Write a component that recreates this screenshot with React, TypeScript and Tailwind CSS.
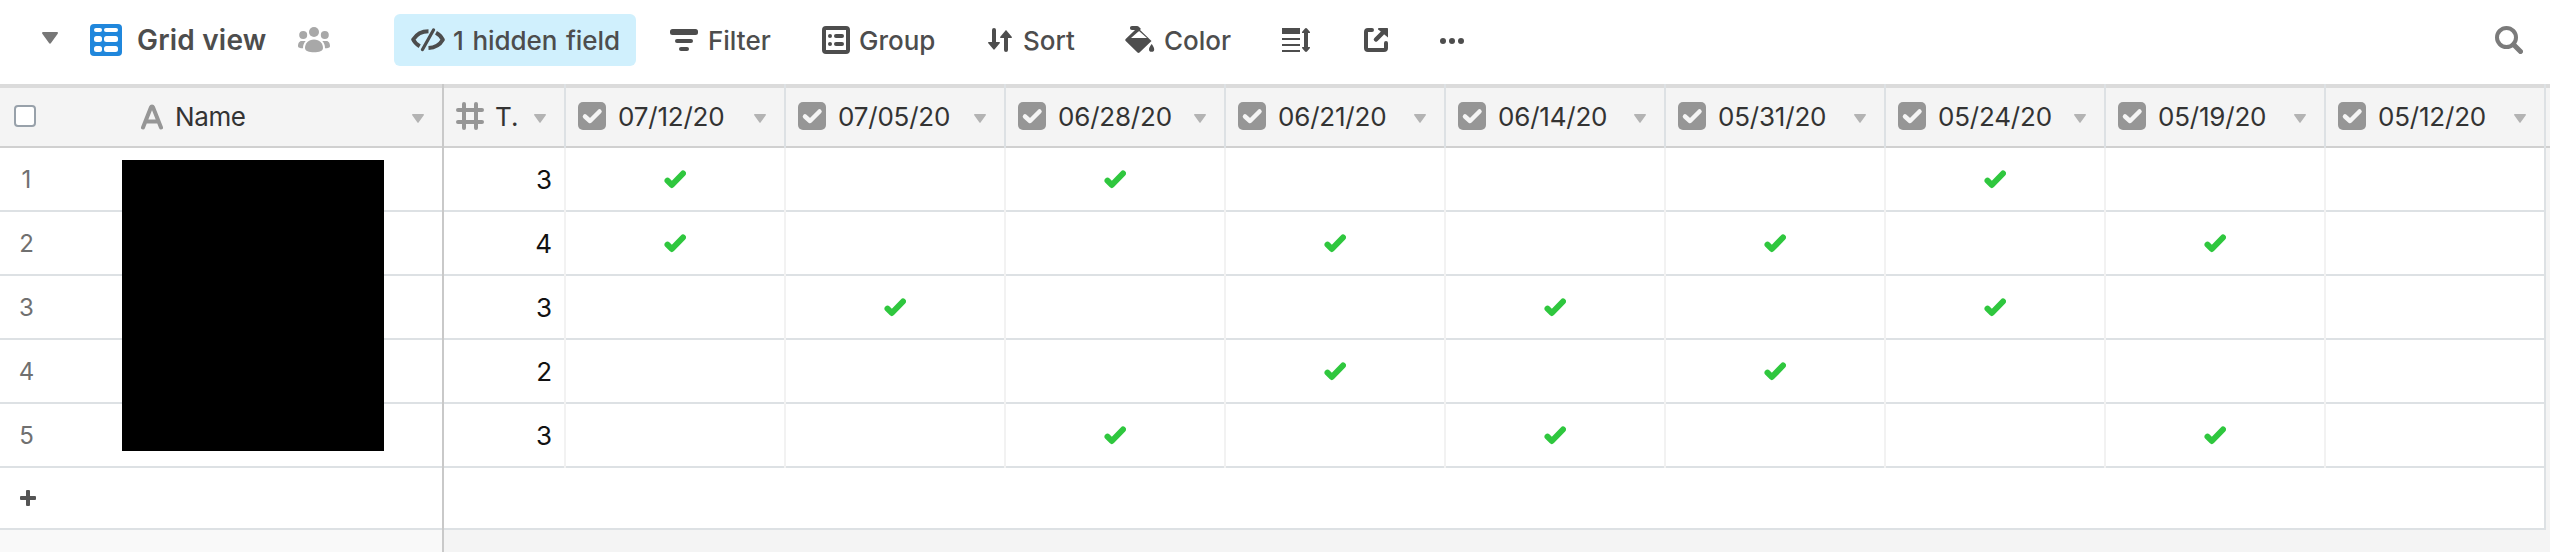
import React from 'react';

const FIELDS = ['07/12/20', '07/05/20', '06/28/20', '06/21/20', '06/14/20', '05/31/20', '05/24/20', '05/19/20', '05/12/20'];

interface Row {
    id: number;
    total: number;
    checked: number[];
}

const ROWS: Row[] = [
    { id: 1, total: 3, checked: [0, 2, 6] },
    { id: 2, total: 4, checked: [0, 3, 5, 7] },
    { id: 3, total: 3, checked: [1, 4, 6] },
    { id: 4, total: 2, checked: [3, 5] },
    { id: 5, total: 3, checked: [2, 4, 7] },
];

const CaretIcon: React.FC<{ className?: string }> = ({ className }) => (
    <svg className={className} viewBox="0 0 16 12" preserveAspectRatio="none" fill="currentColor">
        <path d="M1 0h14c.9 0 1.2 1 .7 1.7L9 11c-.5.9-1.5.9-2 0L.3 1.7C-.2 1 .1 0 1 0z" />
    </svg>
);

const GridIcon = () => (
    <svg className="h-8 w-8 text-[#2087dc]" viewBox="0 0 32 32">
        <rect width="32" height="32" rx="4" fill="currentColor" />
        <g fill="#fff">
            <rect x="4" y="4" width="8" height="4" rx="2" />
            <rect x="14" y="4" width="14" height="4" rx="2" />
            <rect x="4" y="12" width="8" height="6" rx="2.5" />
            <rect x="14" y="12" width="14" height="6" rx="2.5" />
            <rect x="4" y="22" width="8" height="6" rx="2.5" />
            <rect x="14" y="22" width="14" height="6" rx="2.5" />
        </g>
    </svg>
);

const PeopleIcon = () => (
    <svg className="h-[26px] w-8 text-[#a8a8a8]" viewBox="0 0 32 26" fill="currentColor">
        <circle cx="16" cy="5" r="5" />
        <circle cx="5.2" cy="8" r="4" />
        <circle cx="26.8" cy="8" r="4" />
        <path d="M16 12.5c5.5 0 9 3.7 9 8.5 0 3-4 4.2-9 4.2S7 24 7 21c0-4.8 3.5-8.5 9-8.5z" />
        <path d="M3.500 14h4.200C5.900 16 5 18.200 5 21.200 2 21.200 0 20.800 0 19.200 0 16.500 1.300 14 3.500 14zM28.500 14h-4.200c1.800 2 2.700 4.200 2.700 7.200 3 0 5-.4 5-2 0-2.700-1.300-5.200-3.500-5.200z" />
    </svg>
);

const HiddenIcon = () => (
    <svg className="h-6 w-[34px]" viewBox="0 0 34 24" fill="none" stroke="currentColor" strokeLinecap="round">
        <path d="M17.500 3.200C10 3.200 5 7 2.200 11.500c1.200 2.600 3.500 5 6.500 6.800" strokeWidth="4" strokeLinejoin="round" strokeLinecap="butt" />
        <path d="M25 4.800c3 1.600 5.400 4.100 6.800 6.900-2.800 4.800-7.800 8-14.300 8.300" strokeWidth="4" strokeLinejoin="round" strokeLinecap="butt" />
        <path d="M22.500 2 11.500 21.500" strokeWidth="3.200" />
    </svg>
);

const FilterIcon = () => (
    <svg className="h-[22px] w-7" viewBox="0 0 28 22" fill="currentColor">
        <rect width="28" height="6" rx="2.5" />
        <rect x="5" y="10" width="18" height="4" rx="2" />
        <rect x="9" y="18" width="10" height="4" rx="2" />
    </svg>
);

const GroupIcon = () => (
    <svg className="h-7 w-7" viewBox="0 0 28 28" fill="currentColor">
        <rect x="2" y="2" width="24" height="24" rx="2" fill="none" stroke="currentColor" strokeWidth="4" />
        <circle cx="8" cy="10" r="2" />
        <circle cx="8" cy="18" r="2" />
        <rect x="12" y="8" width="10" height="4" rx="2" />
        <rect x="12" y="16" width="10" height="4" rx="2" />
    </svg>
);

const SortIcon = () => (
    <svg className="h-6 w-6" viewBox="0 0 24 24" fill="currentColor">
        <path d="M4 2a2 2 0 0 1 4 0v12h3.200c.8 0 1 .8.5 1.300l-5 6c-.4.5-1 .5-1.400 0l-5-6c-.5-.5-.3-1.300.5-1.300H4z" />
        <path d="M20 22a2 2 0 0 1-4 0V10h-3.200c-.8 0-1-.8-.5-1.300l5-6c.4-.5 1-.5 1.400 0l5 6c.5.5.3 1.300-.5 1.300H20z" />
    </svg>
);

const PaintIcon = () => (
    <svg className="h-7 w-[30px]" viewBox="0 0 30 28" fill="currentColor">
        <path d="M13.500 2.500 26.500 15 14.500 26.500c-.6.6-1.400.6-2 0L.7 15c-.6-.6-.6-1.400 0-2L9 5l4-4zM14 5 6 12h16z" fillRule="evenodd" />
        <path d="M5 2c0-1.300.7-2 2-2h5c.8 0 1.300.2 1.800.7l2.200 2.200L12.500 6 10.800 4H7C5.700 4 5 3.300 5 2z" />
        <path d="M26.700 18c1.200 1.800 2.500 3.500 2.500 5.200a2.600 2.600 0 0 1-5.200 0c0-1.700 1.400-3.400 2.700-5.200z" />
    </svg>
);

const RowHeightIcon = () => (
    <svg className="h-6 w-7" viewBox="0 0 28 24" fill="currentColor">
        <rect width="18" height="6" />
        <rect y="10" width="18" height="2" />
        <rect y="16" width="18" height="2" />
        <rect y="22" width="18" height="2" />
        <path d="M24 0c.5 0 .8.2 1 .5l2.800 3.300c.5.6.2 1.200-.5 1.200H26v14h1.300c.7 0 1 .6.5 1.200L25 23.500c-.5.6-1.500.6-2 0l-2.800-3.300c-.5-.6-.2-1.200.5-1.200H22V5h-1.300c-.7 0-1-.6-.5-1.200L23 .5c.2-.3.5-.5 1-.5z" />
    </svg>
);

const ShareIcon = () => (
    <svg className="h-6 w-6" viewBox="0 0 24 24" fill="none" stroke="currentColor" strokeWidth="4" strokeLinecap="round">
        <path d="M8 2H4a2 2 0 0 0-2 2v16a2 2 0 0 0 2 2h16a2 2 0 0 0 2-2v-5" />
        <path d="m12 11.500 6-6" strokeWidth="4.5" />
        <path d="M15 0h8c.6 0 1 .4 1 1v8.500L14.200 1.600C13.600 1 14 0 15 0z" fill="currentColor" stroke="none" />
    </svg>
);

const MoreIcon = () => (
    <svg className="h-1.5 w-6" viewBox="0 0 24 6" fill="currentColor">
        <circle cx="3" cy="3" r="3" />
        <circle cx="12" cy="3" r="3" />
        <circle cx="21" cy="3" r="3" />
    </svg>
);

const SearchIcon = () => (
    <svg className="h-7 w-7 text-[#7b7b7b]" viewBox="0 0 28 28" fill="none" stroke="currentColor">
        <circle cx="11.5" cy="11.5" r="9.5" strokeWidth="4" />
        <path d="m18.500 18.500 7 7" strokeWidth="5" strokeLinecap="round" />
    </svg>
);

const TextFieldIcon = () => (
    <svg className="h-[26px] w-[22px] text-[#969696]" viewBox="0 0 22 26" fill="none" stroke="currentColor" strokeWidth="4" strokeLinecap="round" strokeLinejoin="round">
        <path d="M2 23.500 10 3.200c.4-1 1.600-1 2 0l8 20.300M5.500 17.500h11" />
    </svg>
);

const NumberFieldIcon = () => (
    <svg className="h-7 w-7 text-[#969696]" viewBox="0 0 28 28" fill="none" stroke="currentColor" strokeWidth="4" strokeLinecap="round">
        <path d="M8 2v24M20 2v24M2 8h24M2 20h24" />
    </svg>
);

const CheckboxFieldIcon = () => (
    <svg className="h-7 w-7 shrink-0 text-[#969696]" viewBox="0 0 28 28">
        <rect width="28" height="28" rx="5" fill="currentColor" />
        <path d="m7 14.500 5 4.500 9.500-9.500" fill="none" stroke="#f5f5f5" strokeWidth="4.5" strokeLinecap="round" strokeLinejoin="round" />
    </svg>
);

const CheckMark = () => (
    <svg className="h-[19px] w-[22px] text-[#2fc73e]" viewBox="0 0 22 19" fill="none" stroke="currentColor" strokeWidth="6" strokeLinecap="round" strokeLinejoin="round">
        <path d="m3.500 10.700 4.300 4.300L19 3.500" />
    </svg>
);

const HeaderCell: React.FC<{ className: string; children: React.ReactNode }> = ({ className, children }) => (
    <div className={`flex h-full shrink-0 flex-col border-r-2 ${className}`}>
        <div className="h-1 shrink-0 bg-[#dbdbdb]" />
        <div className="flex h-[58px] items-center pb-0.5">{children}</div>
        <div className="h-0.5 shrink-0 bg-[#d0d0d0]" />
    </div>
);

const Toolbar = () => (
    <div className="flex h-[84px] items-center bg-white pb-1 pl-[42px] text-[26px] font-medium whitespace-nowrap text-[#4d4d4d]">
        <CaretIcon className="mr-8 h-3 w-4 -translate-y-0.5 text-[#777]" />
        <GridIcon />
        <div className="ml-[15px] w-[161px] text-[28px] font-semibold tracking-[0.2px]">Grid view</div>
        <PeopleIcon />
        <div className="ml-16 flex h-[52px] w-[242px] items-center rounded-md bg-[#d0f0fd] pl-[17px]">
            <HiddenIcon />
            <span className="ml-2 pt-px tracking-[-0.1px] [word-spacing:2px]">1 hidden field</span>
        </div>
        <div className="ml-[34px] flex w-[152px] items-center">
            <FilterIcon />
            <span className="pl-[10px] pt-px">Filter</span>
        </div>
        <div className="flex w-[166px] items-center">
            <GroupIcon />
            <span className="pl-[9px] pt-px">Group</span>
        </div>
        <div className="flex w-[137px] items-center">
            <SortIcon />
            <span className="pl-[11px] pt-px">Sort</span>
        </div>
        <div className="flex w-[157px] items-center">
            <PaintIcon />
            <span className="pl-[9px] pt-px">Color</span>
        </div>
        <div className="flex items-center">
            <RowHeightIcon />
            <div className="ml-[54px]"><ShareIcon /></div>
            <div className="ml-[52px] pt-0.5"><MoreIcon /></div>
        </div>
        <div className="mr-[27px] ml-auto"><SearchIcon /></div>
    </div>
);

const GridHeader = () => (
    <div className="flex h-16 bg-[#f4f4f4] text-[26px] whitespace-nowrap text-[#333]">
        <HeaderCell className="w-[444px] border-[#c9c9c9]">
            <div className="ml-3.5 h-[22px] w-[22px] rounded-[4px] border-2 border-[#98a1aa] bg-white" />
            <div className="ml-[105px] pt-0.5"><TextFieldIcon /></div>
            <span className="ml-3 pt-px tracking-[-0.4px]">Name</span>
            <CaretIcon className="mt-1 mr-[18px] ml-auto h-[9px] w-3 text-[#b3b3b3]" />
        </HeaderCell>
        <HeaderCell className="w-[122px] border-[#dde1e4]">
            <div className="ml-3"><NumberFieldIcon /></div>
            <span className="ml-[11px] pt-px">T.</span>
            <CaretIcon className="mt-1 mr-[18px] ml-auto h-[9px] w-3 text-[#b3b3b3]" />
        </HeaderCell>
        {FIELDS.map(field => (
            <HeaderCell key={field} className="w-[220px] border-[#dde1e4]">
                <div className="ml-3"><CheckboxFieldIcon /></div>
                <span className="ml-3 pt-px tracking-[-0.2px]">{field}</span>
                <CaretIcon className="mt-1 mr-[18px] ml-auto h-[9px] w-3 text-[#b3b3b3]" />
            </HeaderCell>
        ))}
        <div className="h-full flex-1 border-t-4 border-b-2 border-t-[#dbdbdb] border-b-[#d0d0d0]" />
    </div>
);

const GridRow: React.FC<{ row: Row }> = ({ row }) => (
    <div className="flex h-16 bg-[#f4f4f4] text-[26px] text-[#111]">
        <div className="flex w-[444px] shrink-0 border-r-2 border-[#c9c9c9]">
            <div className="flex w-full items-center border-b-2 border-[#dde1e4] bg-white">
                <span className="w-[53px] pt-px text-center text-2xl text-[#707070]">{row.id}</span>
            </div>
        </div>
        <div className="flex w-[122px] shrink-0 border-r-2 border-[#f2f2f2]">
            <div className="flex w-full items-center justify-end border-b-2 border-[#dde1e4] bg-white pr-3">{row.total}</div>
        </div>
        {FIELDS.map((field, i) => (
            <div key={field} className="flex w-[220px] shrink-0 border-r-2 border-[#f2f2f2] last:border-[#dde1e4]">
                <div className="flex w-full items-center justify-center border-b-2 border-[#dde1e4] bg-white">
                    {row.checked.includes(i) && <CheckMark />}
                </div>
            </div>
        ))}
    </div>
);

const App = () => (
    <div className="flex h-[552px] w-[2550px] flex-col overflow-hidden bg-[#f4f4f4] font-['Inter',sans-serif]">
        <Toolbar />
        <GridHeader />
        <div className="relative">
            {ROWS.map(row => <GridRow key={row.id} row={row} />)}
            {/* covers the name column */}
            <div className="absolute top-3 left-[122px] h-[291px] w-[262px] bg-black" />
        </div>
        <div className="flex h-[62px]">
            <div className="flex w-[444px] items-center border-r-2 border-[#c9c9c9]">
                <div className="flex h-full w-full items-center border-b-2 border-[#dde1e4] bg-white pl-5">
                    <svg className="h-4 w-4 text-[#555]" viewBox="0 0 16 16" fill="currentColor">
                        <rect x="6" width="4" height="16" rx="1" />
                        <rect y="6" width="16" height="4" rx="1" />
                    </svg>
                </div>
            </div>
            <div className="w-[2102px] border-r-2 border-b-2 border-[#dde1e4] bg-white" />
        </div>
        <div className="w-[444px] flex-1 border-r-2 border-[#c9c9c9] bg-[#f9f9f9]" />
    </div>
);

export default App;
